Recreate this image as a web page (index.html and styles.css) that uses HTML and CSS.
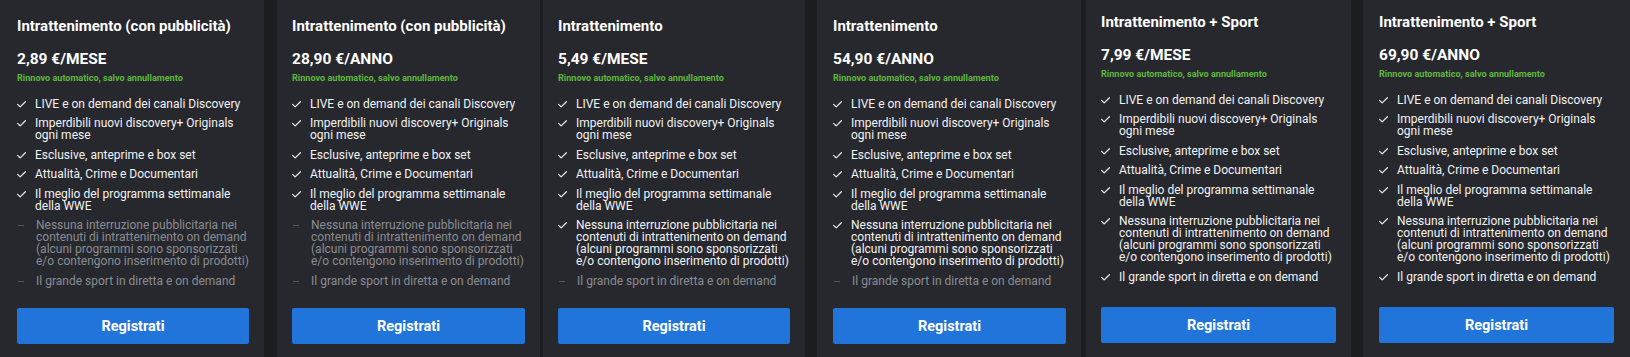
FILE: index.html
```html
<!DOCTYPE html>
<html lang="it">
<head>
<meta charset="utf-8">
<title>Piani discovery+</title>
<link rel="stylesheet" href="styles.css">
</head>
<body>
<div class="plans">

  <section class="plan">
    <h2 class="plan-title">Intrattenimento (con pubblicità)</h2>
    <p class="plan-price">2,89 €/MESE</p>
    <p class="plan-note">Rinnovo automatico, salvo annullamento</p>
    <ul class="features">
      <li class="feature"><svg class="tick" viewBox="0 0 9 7"><polyline points="0.6,3.4 3.2,5.9 8.4,0.7"/></svg><span>LIVE e on demand dei canali Discovery</span></li>
      <li class="feature"><svg class="tick" viewBox="0 0 9 7"><polyline points="0.6,3.4 3.2,5.9 8.4,0.7"/></svg><span>Imperdibili nuovi discovery+ Originals ogni mese</span></li>
      <li class="feature"><svg class="tick" viewBox="0 0 9 7"><polyline points="0.6,3.4 3.2,5.9 8.4,0.7"/></svg><span>Esclusive, anteprime e box set</span></li>
      <li class="feature"><svg class="tick" viewBox="0 0 9 7"><polyline points="0.6,3.4 3.2,5.9 8.4,0.7"/></svg><span>Attualità, Crime e Documentari</span></li>
      <li class="feature"><svg class="tick" viewBox="0 0 9 7"><polyline points="0.6,3.4 3.2,5.9 8.4,0.7"/></svg><span>Il meglio del programma settimanale della WWE</span></li>
      <li class="feature feature--off"><span class="dash"></span><span>Nessuna interruzione pubblicitaria nei contenuti di intrattenimento on demand (alcuni programmi sono sponsorizzati e/o contengono inserimento di prodotti)</span></li>
      <li class="feature feature--off"><span class="dash"></span><span>Il grande sport in diretta e on demand</span></li>
    </ul>
    <button class="cta">Registrati</button>
  </section>

  <section class="plan">
    <h2 class="plan-title">Intrattenimento (con pubblicità)</h2>
    <p class="plan-price">28,90 €/ANNO</p>
    <p class="plan-note">Rinnovo automatico, salvo annullamento</p>
    <ul class="features">
      <li class="feature"><svg class="tick" viewBox="0 0 9 7"><polyline points="0.6,3.4 3.2,5.9 8.4,0.7"/></svg><span>LIVE e on demand dei canali Discovery</span></li>
      <li class="feature"><svg class="tick" viewBox="0 0 9 7"><polyline points="0.6,3.4 3.2,5.9 8.4,0.7"/></svg><span>Imperdibili nuovi discovery+ Originals ogni mese</span></li>
      <li class="feature"><svg class="tick" viewBox="0 0 9 7"><polyline points="0.6,3.4 3.2,5.9 8.4,0.7"/></svg><span>Esclusive, anteprime e box set</span></li>
      <li class="feature"><svg class="tick" viewBox="0 0 9 7"><polyline points="0.6,3.4 3.2,5.9 8.4,0.7"/></svg><span>Attualità, Crime e Documentari</span></li>
      <li class="feature"><svg class="tick" viewBox="0 0 9 7"><polyline points="0.6,3.4 3.2,5.9 8.4,0.7"/></svg><span>Il meglio del programma settimanale della WWE</span></li>
      <li class="feature feature--off"><span class="dash"></span><span>Nessuna interruzione pubblicitaria nei contenuti di intrattenimento on demand (alcuni programmi sono sponsorizzati e/o contengono inserimento di prodotti)</span></li>
      <li class="feature feature--off"><span class="dash"></span><span>Il grande sport in diretta e on demand</span></li>
    </ul>
    <button class="cta">Registrati</button>
  </section>

  <section class="plan">
    <h2 class="plan-title">Intrattenimento</h2>
    <p class="plan-price">5,49 €/MESE</p>
    <p class="plan-note">Rinnovo automatico, salvo annullamento</p>
    <ul class="features">
      <li class="feature"><svg class="tick" viewBox="0 0 9 7"><polyline points="0.6,3.4 3.2,5.9 8.4,0.7"/></svg><span>LIVE e on demand dei canali Discovery</span></li>
      <li class="feature"><svg class="tick" viewBox="0 0 9 7"><polyline points="0.6,3.4 3.2,5.9 8.4,0.7"/></svg><span>Imperdibili nuovi discovery+ Originals ogni mese</span></li>
      <li class="feature"><svg class="tick" viewBox="0 0 9 7"><polyline points="0.6,3.4 3.2,5.9 8.4,0.7"/></svg><span>Esclusive, anteprime e box set</span></li>
      <li class="feature"><svg class="tick" viewBox="0 0 9 7"><polyline points="0.6,3.4 3.2,5.9 8.4,0.7"/></svg><span>Attualità, Crime e Documentari</span></li>
      <li class="feature"><svg class="tick" viewBox="0 0 9 7"><polyline points="0.6,3.4 3.2,5.9 8.4,0.7"/></svg><span>Il meglio del programma settimanale della WWE</span></li>
      <li class="feature"><svg class="tick" viewBox="0 0 9 7"><polyline points="0.6,3.4 3.2,5.9 8.4,0.7"/></svg><span>Nessuna interruzione pubblicitaria nei contenuti di intrattenimento on demand (alcuni programmi sono sponsorizzati e/o contengono inserimento di prodotti)</span></li>
      <li class="feature feature--off"><span class="dash"></span><span>Il grande sport in diretta e on demand</span></li>
    </ul>
    <button class="cta">Registrati</button>
  </section>

  <section class="plan">
    <h2 class="plan-title">Intrattenimento</h2>
    <p class="plan-price">54,90 €/ANNO</p>
    <p class="plan-note">Rinnovo automatico, salvo annullamento</p>
    <ul class="features">
      <li class="feature"><svg class="tick" viewBox="0 0 9 7"><polyline points="0.6,3.4 3.2,5.9 8.4,0.7"/></svg><span>LIVE e on demand dei canali Discovery</span></li>
      <li class="feature"><svg class="tick" viewBox="0 0 9 7"><polyline points="0.6,3.4 3.2,5.9 8.4,0.7"/></svg><span>Imperdibili nuovi discovery+ Originals ogni mese</span></li>
      <li class="feature"><svg class="tick" viewBox="0 0 9 7"><polyline points="0.6,3.4 3.2,5.9 8.4,0.7"/></svg><span>Esclusive, anteprime e box set</span></li>
      <li class="feature"><svg class="tick" viewBox="0 0 9 7"><polyline points="0.6,3.4 3.2,5.9 8.4,0.7"/></svg><span>Attualità, Crime e Documentari</span></li>
      <li class="feature"><svg class="tick" viewBox="0 0 9 7"><polyline points="0.6,3.4 3.2,5.9 8.4,0.7"/></svg><span>Il meglio del programma settimanale della WWE</span></li>
      <li class="feature"><svg class="tick" viewBox="0 0 9 7"><polyline points="0.6,3.4 3.2,5.9 8.4,0.7"/></svg><span>Nessuna interruzione pubblicitaria nei contenuti di intrattenimento on demand (alcuni programmi sono sponsorizzati e/o contengono inserimento di prodotti)</span></li>
      <li class="feature feature--off"><span class="dash"></span><span>Il grande sport in diretta e on demand</span></li>
    </ul>
    <button class="cta">Registrati</button>
  </section>

  <section class="plan plan--raised">
    <h2 class="plan-title">Intrattenimento + Sport</h2>
    <p class="plan-price">7,99 €/MESE</p>
    <p class="plan-note">Rinnovo automatico, salvo annullamento</p>
    <ul class="features">
      <li class="feature"><svg class="tick" viewBox="0 0 9 7"><polyline points="0.6,3.4 3.2,5.9 8.4,0.7"/></svg><span>LIVE e on demand dei canali Discovery</span></li>
      <li class="feature"><svg class="tick" viewBox="0 0 9 7"><polyline points="0.6,3.4 3.2,5.9 8.4,0.7"/></svg><span>Imperdibili nuovi discovery+ Originals ogni mese</span></li>
      <li class="feature"><svg class="tick" viewBox="0 0 9 7"><polyline points="0.6,3.4 3.2,5.9 8.4,0.7"/></svg><span>Esclusive, anteprime e box set</span></li>
      <li class="feature"><svg class="tick" viewBox="0 0 9 7"><polyline points="0.6,3.4 3.2,5.9 8.4,0.7"/></svg><span>Attualità, Crime e Documentari</span></li>
      <li class="feature"><svg class="tick" viewBox="0 0 9 7"><polyline points="0.6,3.4 3.2,5.9 8.4,0.7"/></svg><span>Il meglio del programma settimanale della WWE</span></li>
      <li class="feature"><svg class="tick" viewBox="0 0 9 7"><polyline points="0.6,3.4 3.2,5.9 8.4,0.7"/></svg><span>Nessuna interruzione pubblicitaria nei contenuti di intrattenimento on demand (alcuni programmi sono sponsorizzati e/o contengono inserimento di prodotti)</span></li>
      <li class="feature"><svg class="tick" viewBox="0 0 9 7"><polyline points="0.6,3.4 3.2,5.9 8.4,0.7"/></svg><span>Il grande sport in diretta e on demand</span></li>
    </ul>
    <button class="cta">Registrati</button>
  </section>

  <section class="plan plan--raised">
    <h2 class="plan-title">Intrattenimento + Sport</h2>
    <p class="plan-price">69,90 €/ANNO</p>
    <p class="plan-note">Rinnovo automatico, salvo annullamento</p>
    <ul class="features">
      <li class="feature"><svg class="tick" viewBox="0 0 9 7"><polyline points="0.6,3.4 3.2,5.9 8.4,0.7"/></svg><span>LIVE e on demand dei canali Discovery</span></li>
      <li class="feature"><svg class="tick" viewBox="0 0 9 7"><polyline points="0.6,3.4 3.2,5.9 8.4,0.7"/></svg><span>Imperdibili nuovi discovery+ Originals ogni mese</span></li>
      <li class="feature"><svg class="tick" viewBox="0 0 9 7"><polyline points="0.6,3.4 3.2,5.9 8.4,0.7"/></svg><span>Esclusive, anteprime e box set</span></li>
      <li class="feature"><svg class="tick" viewBox="0 0 9 7"><polyline points="0.6,3.4 3.2,5.9 8.4,0.7"/></svg><span>Attualità, Crime e Documentari</span></li>
      <li class="feature"><svg class="tick" viewBox="0 0 9 7"><polyline points="0.6,3.4 3.2,5.9 8.4,0.7"/></svg><span>Il meglio del programma settimanale della WWE</span></li>
      <li class="feature"><svg class="tick" viewBox="0 0 9 7"><polyline points="0.6,3.4 3.2,5.9 8.4,0.7"/></svg><span>Nessuna interruzione pubblicitaria nei contenuti di intrattenimento on demand (alcuni programmi sono sponsorizzati e/o contengono inserimento di prodotti)</span></li>
      <li class="feature"><svg class="tick" viewBox="0 0 9 7"><polyline points="0.6,3.4 3.2,5.9 8.4,0.7"/></svg><span>Il grande sport in diretta e on demand</span></li>
    </ul>
    <button class="cta">Registrati</button>
  </section>

</div>
</body>
</html>
```

FILE: styles.css
```css
* {
  box-sizing: border-box;
}

html, body {
  margin: 0;
  padding: 0;
  background: #1c1d21;
}

body {
  font-family: Roboto, "Liberation Sans", Arial, sans-serif;
  color: #ffffff;
  -webkit-font-smoothing: antialiased;
}

.plans {
  display: flex;
  width: 1630px;
  height: 357px;
  background: #1c1d21;
}

.plan {
  display: flex;
  flex-direction: column;
  flex: none;
  height: 357px;
  padding: 17px 15px 13px 15px;
  background: #26282e;
}

.plan:nth-child(1) { width: 264px; padding-left: 17px; }
.plan:nth-child(2) { width: 263px; margin-left: 13px; }
.plan:nth-child(3) { width: 262px; margin-left: 3px; }
.plan:nth-child(4) { width: 264px; margin-left: 12px; padding-left: 16px; }
.plan:nth-child(5) { width: 265px; margin-left: 5px; }
.plan:nth-child(6) { width: 267px; margin-left: 12px; padding-left: 16px; padding-right: 16px; }

.plan--raised {
  padding-top: 13px;
  padding-bottom: 14px;
}

.plan-title {
  margin: 0;
  font-size: 15px;
  line-height: 18px;
  font-weight: 700;
  color: #ffffff;
  white-space: nowrap;
}

.plan-price {
  margin: 14.5px 0 0;
  font-size: 15.5px;
  line-height: 18px;
  font-weight: 700;
  color: #ffffff;
}

.plan-note {
  margin: 5.5px 0 0;
  font-size: 9.1px;
  line-height: 11px;
  font-weight: 700;
  color: #5fb83c;
}

.features {
  list-style: none;
  margin: 13.5px 0 0;
  padding: 0;
  display: flex;
  flex-direction: column;
  gap: 7.6px;
}

.feature {
  display: flex;
  align-items: flex-start;
  font-size: 12px;
  line-height: 12px;
  color: #f2f2f2;
}

.feature > span:last-child {
  flex: 1;
}

.tick {
  flex: none;
  width: 9px;
  height: 7px;
  margin: 3px 9px 0 0;
  fill: none;
  stroke: #e6e6e6;
  stroke-width: 1.3;
  stroke-linecap: round;
  stroke-linejoin: round;
}

.feature--off {
  color: #8a8c91;
}

.dash {
  flex: none;
  width: 6px;
  height: 1px;
  margin: 6px 12px 0 1px;
  background: #55575c;
}

.cta {
  margin-top: auto;
  width: 100%;
  height: 36px;
  border: 0;
  border-radius: 2px;
  background: #2175da;
  color: #ffffff;
  font-family: Roboto, "Liberation Sans", Arial, sans-serif;
  font-size: 14.5px;
  font-weight: 700;
  cursor: pointer;
}
```
